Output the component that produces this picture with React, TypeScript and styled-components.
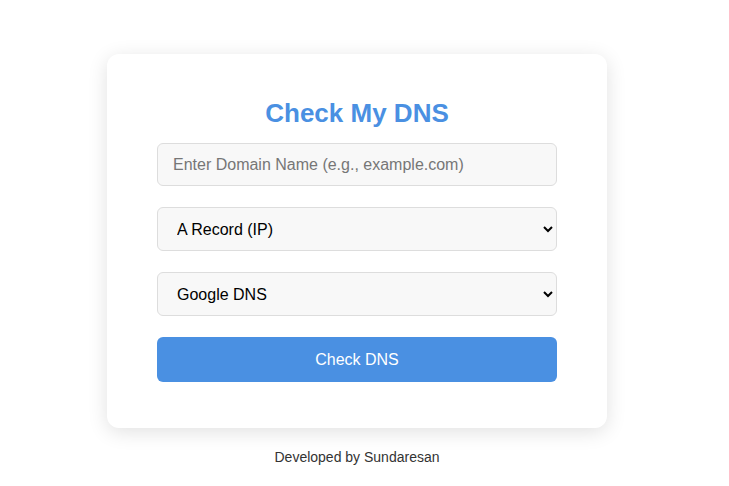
import React from "react";
import styled, { createGlobalStyle } from "styled-components";

const Global = createGlobalStyle`
  html, body { margin: 0; padding: 0; background: #ffffff; }
  body { font-family: Arial, "Liberation Sans", sans-serif; }
  * { box-sizing: border-box; }
`;

const Page = styled.div`
  width: 714px;
  display: flex;
  flex-direction: column;
  align-items: center;
  padding-top: 54px;
`;

const Card = styled.div`
  width: 500px;
  background: #ffffff;
  border-radius: 12px;
  box-shadow: 0 4px 20px rgba(0, 0, 0, 0.12);
  padding: 44px 50px 46px;
  display: flex;
  flex-direction: column;
  gap: 21px;
`;

const Title = styled.h1`
  margin: 1px 0 -5px;
  font-family: Arial, "Liberation Sans", sans-serif;
  font-size: 26px;
  line-height: 28px;
  font-weight: bold;
  color: #4a90e2;
  text-align: center;
`;

const Field = styled.input`
  width: 100%;
  height: 43px;
  padding: 0 15px;
  border: 1px solid #dddddd;
  border-radius: 6px;
  background: #f8f8f8;
  font-family: Arial, "Liberation Sans", sans-serif;
  font-size: 16px;
  color: #222;
  outline: none;
  &::placeholder { color: #767676; }
`;

const Select = styled.select`
  width: 100%;
  height: 44px;
  padding: 0 15px;
  border: 1px solid #dddddd;
  border-radius: 6px;
  background: #f8f8f8;
  font-family: Arial, "Liberation Sans", sans-serif;
  font-size: 16px;
  color: #000;
  outline: none;
`;

const Button = styled.button`
  width: 100%;
  height: 45px;
  border: none;
  border-radius: 6px;
  background: #4a90e2;
  color: #ffffff;
  font-family: Arial, "Liberation Sans", sans-serif;
  font-size: 16px;
  cursor: pointer;
`;

const Footer = styled.p`
  margin: 21px 0 0;
  font-family: Arial, "Liberation Sans", sans-serif;
  font-size: 14px;
  line-height: 16px;
  color: #333333;
  text-align: center;
`;

export default function App() {
  return (
    <>
      <Global />
      <Page>
        <Card>
          <Title>Check My DNS</Title>
          <Field placeholder="Enter Domain Name (e.g., example.com)" />
          <Select defaultValue="A">
            <option value="A">A Record (IP)</option>
            <option value="AAAA">AAAA Record (IPv6)</option>
            <option value="MX">MX Record</option>
            <option value="CNAME">CNAME Record</option>
          </Select>
          <Select defaultValue="google">
            <option value="google">Google DNS</option>
            <option value="cloudflare">Cloudflare DNS</option>
          </Select>
          <Button>Check DNS</Button>
        </Card>
        <Footer>Developed by Sundaresan</Footer>
      </Page>
    </>
  );
}
